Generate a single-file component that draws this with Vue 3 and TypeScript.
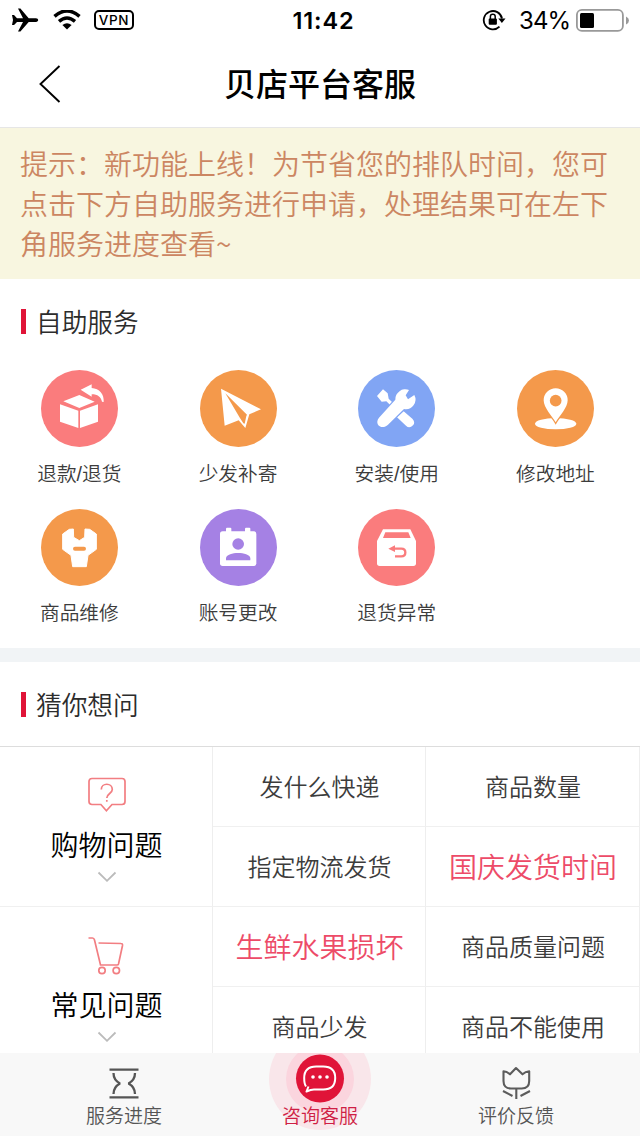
<script setup lang="ts">
type ServiceIcon = 'refund' | 'send' | 'tools' | 'pin' | 'repair' | 'account' | 'box'

interface Service {
  label: string
  icon: ServiceIcon
  tone: 'coral' | 'orange' | 'blue' | 'purple'
}

interface Question {
  label: string
  hot?: boolean
}

interface Category {
  label: string
  icon: 'ask' | 'cart'
  questions: Question[]
}

const services: Service[] = [
  { label: '退款/退货', icon: 'refund', tone: 'coral' },
  { label: '少发补寄', icon: 'send', tone: 'orange' },
  { label: '安装/使用', icon: 'tools', tone: 'blue' },
  { label: '修改地址', icon: 'pin', tone: 'orange' },
  { label: '商品维修', icon: 'repair', tone: 'orange' },
  { label: '账号更改', icon: 'account', tone: 'purple' },
  { label: '退货异常', icon: 'box', tone: 'coral' },
]

const categories: Category[] = [
  {
    label: '购物问题',
    icon: 'ask',
    questions: [
      { label: '发什么快递' },
      { label: '商品数量' },
      { label: '指定物流发货' },
      { label: '国庆发货时间', hot: true },
    ],
  },
  {
    label: '常见问题',
    icon: 'cart',
    questions: [
      { label: '生鲜水果损坏', hot: true },
      { label: '商品质量问题' },
      { label: '商品少发' },
      { label: '商品不能使用' },
    ],
  },
]
</script>

<template>
  <div class="screen">
    <div class="status">
      <div class="status-left">
        <svg class="plane" width="28" height="26" viewBox="0 0 28 26">
          <path d="M1 8h2l3 3.3h6L7 1.5h2.4l8.3 9.8h7.2c3 0 3 3.6 0 3.6h-7.2L9.4 24.600H7l5-9.700H6L3 18H1l1-4.900z" />
        </svg>
        <svg class="wifi" width="28" height="20" viewBox="0 0 28 20">
          <path d="M1.500 6.300Q14-4.400 26.500 6.300M6 11.300q8-6.700 16 0" fill="none" stroke="#000" stroke-width="3.500" />
          <path d="M14 19.500l-4.600-4.600q4.600-3.400 9.200 0z" />
        </svg>
        <span class="vpn">VPN</span>
      </div>
      <span class="time">11:42</span>
      <div class="status-right">
        <svg width="24" height="24" viewBox="0 0 24 24">
          <path d="M17.500 18.700A9.200 9.200 0 1 1 20 10.500" fill="none" stroke="#000" stroke-width="1.800" />
          <path d="M16.300 10.500h7.200l-3.600 4.500z" />
          <rect x="6.700" y="10.500" width="8.200" height="6.200" rx="1" />
          <path d="M8.400 11V8.500q0-2.200 2.400-2.200t2.400 2.200V11" fill="none" stroke="#000" stroke-width="1.500" />
        </svg>
        <span class="percent">34%</span>
        <svg width="54" height="24" viewBox="0 0 54 24">
          <rect x="1.900" y="1.900" width="46" height="21" rx="5" fill="none" stroke="#999" stroke-width="1.800" />
          <rect x="5" y="5" width="14" height="15" rx="1.500" />
          <path d="M51 8.500q3 1.500 3 4t-3 4z" fill="#999" />
        </svg>
      </div>
    </div>

    <header class="header">
      <svg class="back" width="24" height="40" viewBox="0 0 24 40">
        <path d="M21.500 2L2.500 20l19 18" fill="none" stroke="#000" stroke-width="1.900" />
      </svg>
      <h1>贝店平台客服</h1>
    </header>

    <p class="notice">提示：新功能上线！为节省您的排队时间，您可点击下方自助服务进行申请，处理结果可在左下角服务进度查看~</p>

    <section class="self-service">
      <h2>自助服务</h2>
      <div class="services">
        <div v-for="s in services" :key="s.label" class="service">
          <svg class="disc" :class="s.tone" viewBox="0 0 231 231">
            <circle class="bg" cx="115.500" cy="115.500" r="115.500" />
            <g v-if="s.icon === 'refund'">
              <path d="M67 94L115 75l46 20-46 19zM57 103l55 19v52l-55-19zM117 122l54-19v52l-54 19z" />
              <path d="M119 59l33-16v11c23 2 38 18 36 42l-5-1c-3-14-13-22-31-22v7z" />
            </g>
            <g v-else-if="s.icon === 'send'">
              <path d="M63 56l120 62-35 15-12 41-20-23-42 16z" />
              <path class="cut" d="M76 70l65 64-2 4-5 23-4-1-12-19z" />
            </g>
            <g v-else-if="s.icon === 'tools'">
              <path d="M57 78l18-20 14 12 3 16 20 20-7 7-20-19-14 1z" />
              <path d="M117 142l20-18 26 22q10 11 2 20-11 11-21 1z" />
              <path class="edge" d="M63 143l49-54a30 30 0 0 1 41-29l-10 16 7 12 19-13a29 29 0 0 1-31 42L90 164c-18 18-43-1-27-21z" />
            </g>
            <g v-else-if="s.icon === 'pin'">
              <ellipse cx="116" cy="161" rx="62" ry="17" />
              <path class="edge" d="M116 157C105 138 80 113 80 91a36 36 0 0 1 72 0c0 22-25 47-36 66z" />
              <circle class="cut" cx="116" cy="92" r="17.500" />
            </g>
            <g v-else-if="s.icon === 'repair'">
              <path class="rounded" d="M97 60l1 25 17 10 16-10 1-25 14 1 20 14v46l-25 18-5 34H95l-5-34-25-18V75l20-14z" />
              <rect class="cut" x="96" y="113" width="39" height="12" rx="6" />
            </g>
            <g v-else-if="s.icon === 'account'">
              <rect x="60" y="67" width="109" height="104" rx="8" />
              <rect x="78" y="56" width="16" height="18" rx="3" />
              <rect x="135" y="56" width="16" height="18" rx="3" />
              <circle class="cut" cx="114.500" cy="105" r="17.500" />
              <path class="cut" d="M78 154v-7c4-20 69-20 73 0v7z" />
            </g>
            <g v-else>
              <path d="M75 61h82l17 35v67q0 8-8 8H65q-8 0-8-8V96z" />
              <path class="cut" d="M82 70h69l7 17H75z" />
              <path class="cut" d="M91 119l20-10v20z" />
              <path class="hook" d="M109 119h21q12 0 12 11.500T130 142h-19" />
            </g>
          </svg>
          <span>{{ s.label }}</span>
        </div>
      </div>
    </section>

    <section class="guess">
      <h2>猜你想问</h2>
      <div class="table">
        <div v-for="c in categories" :key="c.label" class="group">
          <div class="category">
            <svg v-if="c.icon === 'ask'" class="cat-icon" width="40" height="40" viewBox="0 0 40 40">
              <path d="M5 2.500h30q3 0 3 3v20q0 3-3 3H25l-5.600 6.300-5.500-6.300H5q-3 0-3-3v-20q0-3 3-3z" />
              <path d="M14.300 13.500c0-7 11-7 11 0 0 4-5.500 4-5.500 8.500M19.800 24v1.800" />
            </svg>
            <svg v-else class="cat-icon" width="40" height="40" viewBox="0 0 40 40">
              <path d="M1.500 2h4q1.500 0 2 2l6 25H30q1.200 0 1.500-1L35.500 9.500q.3-2-1.500-2L11.500 7" />
              <circle cx="15" cy="34.500" r="3.200" />
              <circle cx="29.300" cy="34.500" r="3.200" />
            </svg>
            <strong>{{ c.label }}</strong>
            <svg class="chevron" width="20" height="12" viewBox="0 0 20 12">
              <path d="M1.500 1.500L10 9.800l8.500-8.300" fill="none" stroke="#bbb" stroke-width="1.800" />
            </svg>
          </div>
          <div class="questions">
            <div v-for="q in c.questions" :key="q.label" class="question" :class="{ hot: q.hot }">{{ q.label }}</div>
          </div>
        </div>
      </div>
    </section>

    <nav class="tabs">
      <div class="tab">
        <svg width="40" height="40" viewBox="0 0 40 40">
          <path d="M5.500 6.700h29M5.500 34.300h29M9.500 10q0 7 6.500 10.500-6.500 3.500-6.500 10.500M31 10q0 7-6.500 10.500 6.500 3.500 6.500 10.500" fill="none" stroke="#555" stroke-width="2.300" stroke-linejoin="bevel" />
        </svg>
        <span>服务进度</span>
      </div>
      <div class="tab active">
        <svg class="halo" width="102" height="83" viewBox="0 0 102 83">
          <circle cx="51" cy="26" r="51" fill="#f9e6ea" />
          <circle cx="51" cy="26" r="34" fill="#fbd5de" />
          <circle cx="51" cy="25.500" r="24" fill="#e01438" />
          <path d="M37 34.500q-1.800-2.500-1.800-8.500 0-11.500 12-11.500h7q12 0 12 11.500t-12 11.500H45q-3 0-7.500 2l2-5" transform="translate(0 -1)" fill="none" stroke="#fff" stroke-width="2" stroke-linejoin="round" />
          <circle cx="44" cy="24" r="1.800" fill="#fff" />
          <circle cx="51" cy="24" r="1.800" fill="#fff" />
          <circle cx="58" cy="24" r="1.800" fill="#fff" />
        </svg>
        <span>咨询客服</span>
      </div>
      <div class="tab">
        <svg width="40" height="40" viewBox="0 0 40 40">
          <path d="M7.500 8.300q3.500.2 6.500 3L20 5l6.500 6.300q3-2.800 6.700-3V18q0 7.500-7.500 7.500H15q-7.500 0-7.500-7.500zM20.300 25.500v10.500M7 28l9.500 5M34 28l-9.500 5" fill="none" stroke="#5c5c5c" stroke-width="2.100" stroke-linejoin="round" />
        </svg>
        <span>评价反馈</span>
      </div>
    </nav>
  </div>
</template>

<style>
body {
  margin: 0;
}
</style>

<style scoped>
.screen {
  width: 640px;
  height: 1136px;
  overflow: hidden;
  display: flex;
  flex-direction: column;
  background: #fff;
  color: #2c2c2c;
  font-family: "Noto Sans CJK SC DemiLight", "Noto Sans CJK SC", sans-serif;
  font-weight: 350;
}

h1, h2, p {
  margin: 0;
  font-weight: inherit;
}

svg {
  display: block;
  flex: none;
}

.status {
  flex: none;
  height: 40px;
  display: grid;
  grid-template-columns: 1fr auto 1fr;
  align-items: center;
  font-family: Inter, sans-serif;
  font-weight: 400;
  color: #000;
}

.status-left {
  display: flex;
  align-items: center;
  padding-left: 11px;
}

.wifi {
  margin: 0 13px 0 14px;
}

.vpn {
  box-sizing: border-box;
  width: 40px;
  height: 20px;
  border: 2px solid #000;
  border-radius: 5px;
  font-size: 13.500px;
  line-height: 16px;
  font-weight: 500;
  letter-spacing: 0.700px;
  text-align: center;
}

.time {
  width: 66px;
  margin-left: 7px;
  text-align: center;
  font-size: 23.500px;
  font-weight: 600;
  letter-spacing: 0.900px;
}

.status-right {
  display: flex;
  align-items: center;
  justify-content: flex-end;
  padding-right: 11px;
}

.percent {
  width: 50px;
  margin: 0 6px 0 13px;
  font-size: 24px;
  letter-spacing: -0.900px;
  white-space: nowrap;
}

.header {
  flex: none;
  height: 87px;
  display: grid;
  grid-template-columns: 64px 1fr 64px;
  align-items: center;
  border-bottom: 1px solid #e6e6e6;
}

.back {
  margin-left: 38px;
}

h1 {
  text-align: center;
  margin-top: -4px;
  font-family: "Noto Sans CJK SC", sans-serif;
  font-size: 32px;
  line-height: 48px;
  font-weight: 500;
  color: #000;
}

.notice {
  flex: none;
  box-sizing: border-box;
  height: 151px;
  padding: 15px 20px 0;
  background: #f8f6e0;
  color: #cc8662;
  font-size: 28px;
  line-height: 40px;
}

h2 {
  display: flex;
  align-items: center;
  gap: 10px;
  height: 40px;
  padding-left: 21px;
  font-size: 25.700px;
  line-height: 36px;
}

h2::before {
  content: "";
  width: 5px;
  height: 25px;
  background: #e01438;
}

.self-service {
  flex: none;
  box-sizing: border-box;
  height: 383px;
  padding-top: 22px;
  border-bottom: 14px solid #f1f4f6;
}

.services {
  display: grid;
  grid-template-columns: repeat(4, 158.700px);
  grid-auto-rows: 139px;
  margin-top: 29px;
}

.service {
  display: flex;
  flex-direction: column;
  align-items: center;
  gap: 12px;
  font-family: "Liberation Sans", "Noto Sans CJK SC DemiLight", "Noto Sans CJK SC", sans-serif;
  font-size: 19.700px;
  line-height: 30px;
  color: #3c3c3c;
}

.disc {
  width: 77px;
  height: 77px;
  fill: #fff;
}

.coral { --tone: #fa7c7d; }
.orange { --tone: #f4994b; }
.blue { --tone: #81a5f4; }
.purple { --tone: #a581e4; }

.bg, .cut {
  fill: var(--tone);
}

.edge {
  stroke: var(--tone);
  stroke-width: 7px;
  paint-order: stroke;
}

.rounded {
  stroke: #fff;
  stroke-width: 3px;
  stroke-linejoin: round;
}

.hook {
  fill: none;
  stroke: var(--tone);
  stroke-width: 7px;
}

.guess {
  flex: 1;
  min-height: 0;
  overflow: hidden;
  padding-top: 22px;
}

.table {
  margin-top: 22px;
  border-top: 1px solid #ddd;
}

.group {
  display: grid;
  grid-template-columns: 213px 427px;
  height: 160px;
}

.category {
  box-sizing: border-box;
  display: flex;
  flex-direction: column;
  align-items: center;
  padding: 29px 0 0 1px;
  border-right: 1px solid #eee;
  border-bottom: 1px solid #f0f0f0;
}

.cat-icon {
  fill: none;
  stroke: #f27e82;
  stroke-width: 1.700px;
}

.category strong {
  font-size: 28px;
  font-weight: inherit;
  line-height: 40px;
  margin-top: 8px;
  color: #000;
}

.chevron {
  margin-top: 7px;
}

.questions {
  display: grid;
  grid-template-columns: 213px 214px;
  grid-auto-rows: 80px;
}

.question {
  box-sizing: border-box;
  height: 80px;
  padding-left: 1px;
  border-right: 1px solid #eee;
  border-bottom: 1px solid #f0f0f0;
  font-size: 24px;
  line-height: 78px;
  text-align: center;
  color: #3c3c3c;
}

.question.hot {
  font-size: 28px;
  line-height: 79px;
  color: #ed4b68;
}

.tabs {
  flex: none;
  height: 83px;
  display: grid;
  grid-template-columns: repeat(3, 196px);
  justify-content: center;
  background: #f8f8f8;
}

.tab {
  position: relative;
  display: flex;
  flex-direction: column;
  align-items: center;
  padding-top: 10px;
  font-size: 19px;
  line-height: 28px;
  color: #555;
}

.tab span {
  position: relative;
  margin-top: -2px;
}

.tab.active {
  color: #cf1f45;
  justify-content: flex-end;
  padding: 0 0 7px;
}

.halo {
  position: absolute;
  top: 0;
  left: 47px;
}
</style>
